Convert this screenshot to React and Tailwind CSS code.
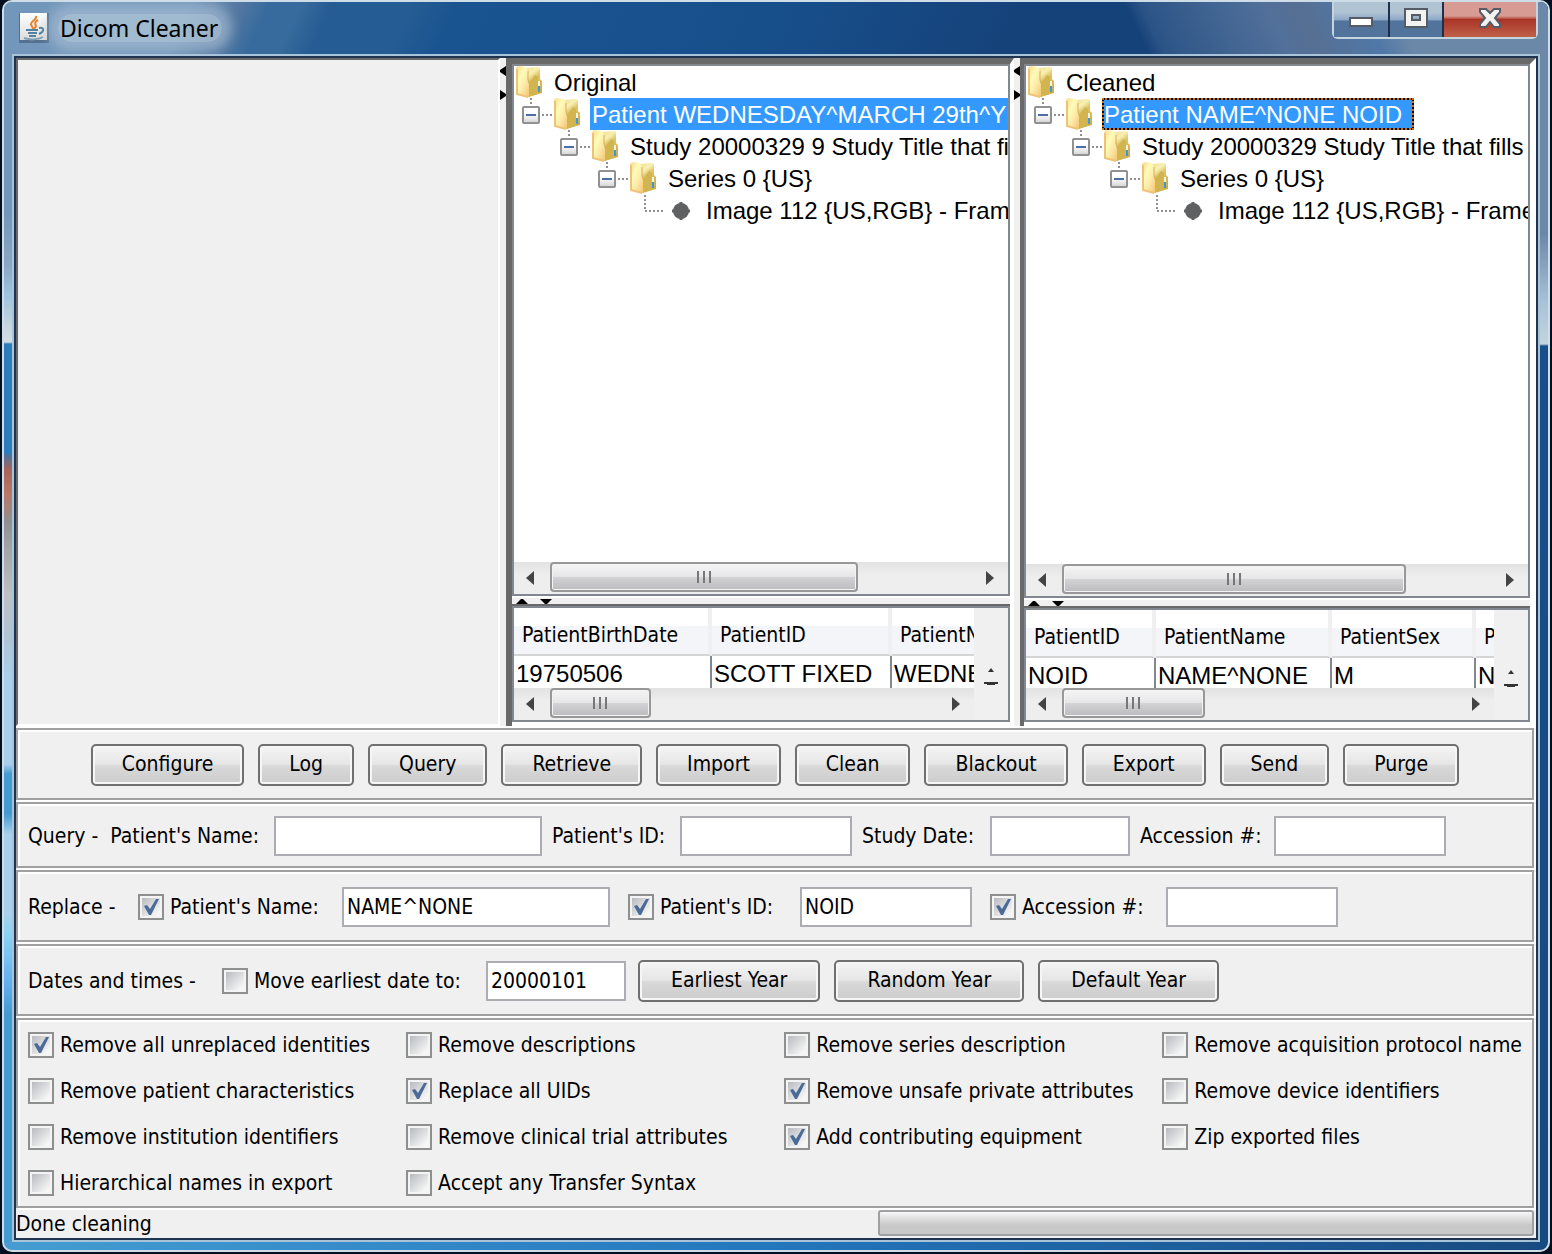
const originalTree = {
  label: 'Original study tree',
  rows: [
    { text: 'Original' },
    { text: 'Patient WEDNESDAY^MARCH 29th^YEAR 2000', selected: true },
    { text: 'Study 20000329 9 Study Title that fills the field' },
    { text: 'Series 0 {US}' },
    { text: 'Image 112 {US,RGB} - Frames 1' },
  ],
};

const cleanedTree = {
  label: 'Cleaned study tree',
  rows: [
    { text: 'Cleaned' },
    { text: 'Patient NAME^NONE NOID', selected: true, focused: true },
    { text: 'Study 20000329 Study Title that fills the field' },
    { text: 'Series 0 {US}' },
    { text: 'Image 112 {US,RGB} - Frames 1' },
  ],
};

const originalTable = [
  { head: 'PatientBirthDate', value: '19750506', width: 'w-[198px]' },
  { head: 'PatientID', value: 'SCOTT FIXED', width: 'w-[180px]' },
  { head: 'PatientName', value: 'WEDNESDAY', width: 'w-[180px]' },
];

const cleanedTable = [
  { head: 'PatientID', value: 'NOID', width: 'w-[130px]' },
  { head: 'PatientName', value: 'NAME^NONE', width: 'w-[176px]' },
  { head: 'PatientSex', value: 'M', width: 'w-[144px]' },
  { head: 'PatientAge', value: 'NONE', width: 'w-[144px]' },
];

const actions = ['Configure', 'Log', 'Query', 'Retrieve', 'Import', 'Clean', 'Blackout', 'Export', 'Send', 'Purge'];

const options = [
  { text: 'Remove all unreplaced identities', checked: true },
  { text: 'Remove descriptions' },
  { text: 'Remove series description' },
  { text: 'Remove acquisition protocol name' },
  { text: 'Remove patient characteristics' },
  { text: 'Replace all UIDs', checked: true },
  { text: 'Remove unsafe private attributes', checked: true },
  { text: 'Remove device identifiers' },
  { text: 'Remove institution identifiers' },
  { text: 'Remove clinical trial attributes' },
  { text: 'Add contributing equipment', checked: true },
  { text: 'Zip exported files' },
  { text: 'Hierarchical names in export' },
  { text: 'Accept any Transfer Syntax' },
];

const indents = ['pl-[2px]', 'pl-[8px]', 'pl-[46px]', 'pl-[84px]', 'pl-[122px]'];

const JavaIcon = () => (
  <svg width="32" height="32" viewBox="0 0 32 32" aria-hidden="true">
    <defs>
      <linearGradient id="java-tile" x1="0" y1="0" x2="0" y2="1">
        <stop offset="0" stopColor="#ffffff" />
        <stop offset="1" stopColor="#dcdcdc" />
      </linearGradient>
    </defs>
    <rect x="1" y="1" width="30" height="30" fill="#55708f" />
    <rect x="2" y="1" width="27" height="27" fill="url(#java-tile)" />
    <path d="M18 4 C19 8 13 9 13 12 C13 14 15 15 15 17" fill="none" stroke="#e8832a" strokeWidth="2" />
    <path d="M20 8 C16 10 17 12 18 14 C18 15 17 16 16 17" fill="none" stroke="#e8832a" strokeWidth="2" />
    <path d="M8 18 H20 M10 21 H19 M11 24 H18" stroke="#5382a1" strokeWidth="2" />
    <path d="M21 16 C27 15 26 20 21 22" fill="none" stroke="#5382a1" strokeWidth="2" />
    <path d="M6 26 C11 28 20 28 25 25" fill="none" stroke="#7d9fb8" strokeWidth="2" />
  </svg>
);

const FolderIcon = () => (
  <svg width="26" height="32" viewBox="0 0 26 32" className="shrink-0" aria-hidden="true">
    <defs>
      <linearGradient id="folder-front" x1="0" y1="0" x2="1" y2="1">
        <stop offset="0" stopColor="#f9d98c" />
        <stop offset="0.35" stopColor="#fffbb8" />
        <stop offset="0.6" stopColor="#fdeaa8" />
        <stop offset="1" stopColor="#f0bf6a" />
      </linearGradient>
      <linearGradient id="folder-back" x1="0" y1="0" x2="0.4" y2="1">
        <stop offset="0" stopColor="#f3dc8e" />
        <stop offset="0.3" stopColor="#f7f0b4" />
        <stop offset="0.5" stopColor="#dec568" />
        <stop offset="1" stopColor="#cfae45" />
      </linearGradient>
    </defs>
    <path d="M10 2 L22 1 L24 2 V13 L26 15 V27 L15 30 L10 29 Z" fill="url(#folder-back)" />
    <path d="M0 2 L2 0 L10 1 L12 4 V14 L14 20 V31 H11 L0 28 Z" fill="url(#folder-front)" />
    <path d="M12 5 V14 L14 20" fill="none" stroke="#d5ae58" strokeWidth="1" />
    <path d="M13 17 L19 9 L22 11 V28 L13 31 Z" fill="#d3b550" />
    <path d="M1 3 V28 L12 31" fill="none" stroke="#edc378" strokeWidth="2" />
    <path d="M23 15 V20" stroke="#f6f3e0" strokeWidth="2" />
    <path d="M23 20 V26" stroke="#3f97dc" strokeWidth="2" />
  </svg>
);

const ExpanderIcon = () => (
  <svg width="32" height="32" viewBox="0 0 32 32" className="shrink-0" aria-hidden="true">
    <defs>
      <linearGradient id="expander" x1="0" y1="0" x2="0" y2="1">
        <stop offset="0.4" stopColor="#ffffff" />
        <stop offset="1" stopColor="#d4d4d4" />
      </linearGradient>
    </defs>
    <path d="M9 0 V8" stroke="#909090" strokeWidth="2" strokeDasharray="2 2" />
    <rect x="1" y="9" width="16" height="16" rx="1" fill="url(#expander)" stroke="#919191" strokeWidth="2" />
    <path d="M4 17 H14" stroke="#4b70a8" strokeWidth="2" />
    <path d="M20 17 H31" stroke="#909090" strokeWidth="2" strokeDasharray="2 2" />
  </svg>
);

const LeafIcon = () => (
  <svg width="58" height="32" viewBox="0 0 58 32" className="shrink-0" aria-hidden="true">
    <path d="M9 1 V17 H28" fill="none" stroke="#909090" strokeWidth="2" strokeDasharray="2 2" />
    <circle cx="45" cy="17" r="8" fill="#5f6062" />
    <path d="M45 8 V26 M36 17 H54" stroke="#5f6062" strokeWidth="3" />
  </svg>
);

const Tree = ({ label, rows }) => (
  <ul role="tree" aria-label={label} className="min-h-0 flex-1 overflow-hidden bg-white font-['Liberation_Sans',sans-serif] text-2xl whitespace-nowrap">
    {rows.map((row, level) => (
      <li key={row.text} role="treeitem" aria-selected={!!row.selected} className={`flex h-8 items-center ${indents[level]}`}>
        {level > 0 && level < 4 && <ExpanderIcon />}
        {level < 4 ? <FolderIcon /> : <LeafIcon />}
        {row.focused ? (
          <span className="ml-[10px] bg-black">
            <span className="block border-2 border-dotted border-[#c87014] bg-[#3399ff] bg-clip-padding pt-[2px] pr-[10px] leading-[26px] text-white">{row.text}</span>
          </span>
        ) : (
          <span className={`ml-[10px] pt-[2px] pl-[2px] leading-[30px] ${row.selected ? 'bg-[#3399ff] text-white' : ''}`}>{row.text}</span>
        )}
      </li>
    ))}
  </ul>
);

const ScrollBar = ({ thumb }) => (
  <div className="flex h-8 shrink-0 bg-linear-to-b from-[#e2e2e2] to-[#eeeeee] to-40%">
    <button type="button" aria-label="Scroll left" className="flex w-9 items-center justify-center pr-1">
      <svg width="8" height="14" viewBox="0 0 8 14"><path d="M8 0 V14 L0 7 Z" fill="#444" /></svg>
    </button>
    <div className="flex-1">
      <div className={`flex h-[30px] items-center justify-center gap-1 rounded-sm border-2 border-[#989898] bg-[linear-gradient(#f5f5f5,#e6e6e8_50%,#d2d2d4_52%,#bcbcc0)] shadow-[inset_0_0_0_1px_#f4f4f4] ${thumb}`}>
        <i className="h-3 w-[2px] bg-[#77777a]" />
        <i className="h-3 w-[2px] bg-[#77777a]" />
        <i className="h-3 w-[2px] bg-[#77777a]" />
      </div>
    </div>
    <button type="button" aria-label="Scroll right" className="flex w-9 items-center justify-center">
      <svg width="8" height="14" viewBox="0 0 8 14"><path d="M0 0 V14 L8 7 Z" fill="#444" /></svg>
    </button>
  </div>
);

const AttributeTable = ({ columns, height, thumb }) => (
  <div className="flex shrink-0 border-2 border-[#828790] bg-[#f0f0f0]">
    <div className="min-w-0 flex-1">
      <div className={`overflow-hidden bg-white ${height}`}>
        <table className="w-0 table-fixed border-separate border-spacing-0 whitespace-nowrap">
          <thead>
            <tr>
              {columns.map((column) => (
                <th
                  key={column.head}
                  className={`h-12 overflow-hidden border-r-4 border-b-2 border-r-[#f0f0f0] border-b-[#d5d5d5] bg-linear-to-b from-white from-40% to-[#f3f5f8] to-40% pt-2 pl-2 text-left leading-7 font-normal ${column.width}`}
                >
                  {column.head}
                </th>
              ))}
            </tr>
          </thead>
          <tbody>
            <tr className="font-['Liberation_Sans',sans-serif] text-2xl leading-8">
              {columns.map((column) => (
                <td key={column.head} className="overflow-hidden border-r-2 border-[#828790] pt-[2px] pl-[2px]">{column.value}</td>
              ))}
            </tr>
          </tbody>
        </table>
      </div>
      <ScrollBar thumb={thumb} />
    </div>
    <div className="flex w-[34px] justify-center pt-[58px]">
      <svg width="16" height="22" viewBox="0 0 16 22" aria-hidden="true">
        <path d="M8 2 L11 6 H5 Z M1 16 H15 V18 H12 V19 H4 V18 H1 Z" fill="#333" />
      </svg>
    </div>
  </div>
);

const StudyPane = ({ tree, columns, edge, treeThumb, tableThumb, tableHeight }) => (
  <section className={`flex min-w-0 flex-col border-t-6 border-t-[#696969] border-r-white border-l-[#696969] bg-white pb-1 ${edge}`}>
    <div className="flex min-h-0 flex-1 flex-col border-2 border-[#828790]">
      <Tree {...tree} />
      <ScrollBar thumb={treeThumb} />
    </div>
    <div className="mt-[2px] flex shrink-0 items-end gap-3 border-b-2 border-[#696969] bg-[#f0f0f0] pl-1">
      <svg width="12" height="6" viewBox="0 0 12 6"><path d="M0 6 L5 1 H7 L12 6 Z" /></svg>
      <svg width="12" height="6" viewBox="0 0 12 6"><path d="M0 1 H12 L7 6 H5 Z" /></svg>
    </div>
    <AttributeTable columns={columns} height={tableHeight} thumb={tableThumb} />
  </section>
);

const Divider = () => (
  <div className="flex flex-col gap-3 bg-[#f0f0f0] pt-[7px]">
    <svg width="6" height="12" viewBox="0 0 6 12"><path d="M6 1 V11 L0 7 V5 Z" /></svg>
    <svg width="6" height="12" viewBox="0 0 6 12"><path d="M0 1 V11 L6 7 V5 Z" /></svg>
  </div>
);

const Panel = ({ className, children }) => (
  <div className={`mr-[2px] mb-[2px] shrink-0 border-2 border-[#a0a0a0] bg-[#f0f0f0] pt-[2px] whitespace-nowrap shadow-[2px_2px_0_#fff,inset_2px_2px_0_#fff] ${className}`}>
    {children}
  </div>
);

const PushButton = ({ padding = 'px-[29px]', children }) => (
  <button
    type="button"
    className={`h-[42px] rounded-[5px] border-2 border-[#707070] bg-[linear-gradient(#f4f4f4,#e6e6e6_48%,#d9d9d9_52%,#cccccc)] pb-[2px] shadow-[inset_0_0_0_2px_#f6f6f6] ${padding}`}
  >
    {children}
  </button>
);

const CheckBox = ({ checked, width = '', children }) => (
  <label className={`flex shrink-0 items-center gap-[6px] ${width}`}>
    <span className="grid size-[26px] shrink-0">
      <input
        type="checkbox"
        defaultChecked={checked}
        className="peer col-start-1 row-start-1 size-[26px] appearance-none border-2 border-[#8e8f8f] bg-linear-to-br from-[#b0b3b8] to-[#f6f6f6] to-80% shadow-[inset_0_0_0_2px_#f4f4f4]"
      />
      <svg viewBox="0 0 26 26" className="pointer-events-none invisible col-start-1 row-start-1 peer-checked:visible" aria-hidden="true">
        <path d="M6 12 L9 11 L12 15 L18 5 H21 L13 21 H11 Z" fill="#4a6a97" />
      </svg>
    </span>
    <span>{children}</span>
  </label>
);

const TextBox = ({ label, width, value }) => (
  <input type="text" aria-label={label} defaultValue={value} className={`h-10 border-2 border-[#abadb3] bg-white px-[3px] ${width}`} />
);

const App = () => (
  <div className="flex min-h-screen flex-col bg-[#04101f] px-[2px] pb-[2px] font-['DejaVu_Sans_Condensed','Noto_Sans',sans-serif] text-[21px] leading-7 text-black">
    <div className="flex flex-1 flex-col overflow-hidden rounded-[10px] border-2 border-[#cfdde8] bg-linear-to-r from-[#459dd2] via-[#2476bd] to-[#174a80]">
      <header className="flex h-[52px] shrink-0 items-start justify-between bg-[linear-gradient(65deg,transparent_73%,#2b5486_74%,#3f6391_78%,#52709a_82%,#566f94_84%,#5078a8_88%,#6c88a8_90%),linear-gradient(115deg,#7397bb_0,#7397bb_12%,#5578a2_15%,#376b9d_17%,#376b9d_19%,#255c93_21%,#255c93_26%,#1a5490_29%,#174f8b_50%,#16427a_65%,#16427a_100%)]">
        <div className="flex items-center gap-2 pt-[10px] pl-[14px]">
          <JavaIcon />
          <h1 className="rounded-full bg-[#b4c9d8]/70 pr-1 pl-[2px] font-['Noto_Sans','Open_Sans',sans-serif] text-[23px] leading-7 shadow-[0_0_12px_10px_#a3bad0b0]">Dicom Cleaner</h1>
        </div>
        <div className="mr-[10px] flex h-[37px] rounded-b-[6px] border-2 border-t-0 border-[#c5d5e0] bg-[#1d3048]">
          <button type="button" aria-label="Minimize" className="mr-[2px] flex w-[54px] justify-center bg-linear-to-b from-[#b0c3d3] from-30% via-[#8ea9c8] via-50% to-[#52739c] to-55% pt-[14px]">
            <svg width="24" height="12" viewBox="0 0 24 12"><rect x="1" y="2" width="22" height="8" fill="#fff" stroke="#555c66" strokeWidth="2" /></svg>
          </button>
          <button type="button" aria-label="Maximize" className="mr-[2px] flex w-[52px] justify-center bg-linear-to-b from-[#b0c3d3] from-30% via-[#8ea9c8] via-50% to-[#52739c] to-55% pt-[5px]">
            <svg width="24" height="22" viewBox="0 0 24 22"><path d="M1 2 H23 V20 H1 Z M8 8 V13 H16 V8 Z" fill="#f2f2f2" fillRule="evenodd" stroke="#555c66" strokeWidth="2" /></svg>
          </button>
          <button type="button" aria-label="Close" className="flex w-[92px] justify-center bg-linear-to-b from-[#d79b94] from-40% via-[#a93327] via-50% to-[#bf6049] pt-[5px]">
            <svg width="24" height="22" viewBox="0 0 24 22"><path d="M2 2 H8 L12 6 L16 2 H22 V5 L17 11 L22 17 V20 H16 L12 15 L8 20 H2 V17 L7 11 L2 5 Z" fill="#f2f2f2" stroke="#555c66" strokeWidth="2" /></svg>
          </button>
        </div>
      </header>

      <div className="flex flex-1">
        <div className="w-2 shrink-0 bg-[linear-gradient(#7397bb_0,#7397bb_160px,#8aa6c4_210px,#9cc3df_240px,#c3d4dd_270px,#d5dde6_288px,#2b7dbd_290px,#2b7dbd_398px,#50719c_402px,#a8645a_416px,#b87868_440px,#909090_468px,#a8a8a8_500px,#c0c0c4_540px,#b0c3d3_580px,#a8d0ee_630px,#a8d0ee_710px,#439bd0_720px,#439bd0_760px,#a8d0ee_780px,#a8d0ee_860px,#8cd2f4_880px,#62aef0_930px,#439bd0_960px)]" />
        <main className="flex min-w-0 flex-1 flex-col border-2 border-[#a9c3d8]">
          <div className="flex flex-1 flex-col border-2 border-[#1b3552] bg-[#f0f0f0]">
            <div className="grid min-h-[400px] flex-1 grid-cols-[484fr_6px_508fr_6px_516fr] border-b-2 border-white">
              <div className="border-2 border-[#696969] border-r-white border-b-white" />
              <Divider />
              <StudyPane
                tree={originalTree}
                columns={originalTable}
                edge="border-l-6 border-r-4"
                treeThumb="w-[73%]"
                tableThumb="w-[26%]"
                tableHeight="h-20"
              />
              <Divider />
              <StudyPane
                tree={cleanedTree}
                columns={cleanedTable}
                edge="border-l-4 border-r-6"
                treeThumb="w-[80%]"
                tableThumb="w-[36%]"
                tableHeight="h-[78px]"
              />
            </div>

            <Panel className="flex h-[72px] items-center justify-center gap-[14px]">
              {actions.map((action) => (
                <PushButton key={action}>{action}</PushButton>
              ))}
            </Panel>

            <Panel className="flex h-[66px] items-center gap-[10px] px-[10px]">
              <span className="flex w-[236px] gap-3">
                <span>Query -</span>
                <span>Patient's Name:</span>
              </span>
              <TextBox label="Query patient's name" width="w-[268px]" />
              <span className="w-[118px]">Patient's ID:</span>
              <TextBox label="Query patient's ID" width="w-[172px]" />
              <span className="w-[118px]">Study Date:</span>
              <TextBox label="Query study date" width="w-[140px]" />
              <span className="w-[124px]">Accession #:</span>
              <TextBox label="Query accession number" width="w-[172px]" />
            </Panel>

            <Panel className="flex h-[72px] items-center gap-[18px] px-[10px]">
              <span className="w-[92px]">Replace -</span>
              <CheckBox checked width="w-[186px]">Patient's Name:</CheckBox>
              <TextBox label="Replacement patient's name" width="w-[268px]" value="NAME^NONE" />
              <CheckBox checked width="w-[154px]">Patient's ID:</CheckBox>
              <TextBox label="Replacement patient's ID" width="w-[172px]" value="NOID" />
              <CheckBox checked width="w-[158px]">Accession #:</CheckBox>
              <TextBox label="Replacement accession number" width="w-[172px]" />
            </Panel>

            <Panel className="flex h-[72px] items-center gap-3 px-[10px]">
              <span className="w-[182px]">Dates and times -</span>
              <CheckBox width="w-[252px]">Move earliest date to:</CheckBox>
              <TextBox label="Earliest date" width="w-[140px]" value="20000101" />
              <div className="flex gap-[14px]">
                <PushButton padding="px-[31px]">Earliest Year</PushButton>
                <PushButton padding="px-[31px]">Random Year</PushButton>
                <PushButton padding="px-[31px]">Default Year</PushButton>
              </div>
            </Panel>

            <Panel className="grid h-[190px] auto-rows-[46px] grid-cols-[378fr_378fr_378fr_358fr] items-center px-[10px]">
              {options.map((option) => (
                <CheckBox key={option.text} checked={option.checked}>{option.text}</CheckBox>
              ))}
            </Panel>

            <footer className="flex h-7 shrink-0 items-start justify-between pr-[2px]">
              <span>Done cleaning</span>
              <div role="progressbar" aria-label="Progress" className="h-[26px] w-[656px] rounded-[3px] border-2 border-[#a0a0a4] bg-linear-to-b from-[#f8f8f8] to-[#c8c8c8] to-60%" />
            </footer>
          </div>
        </main>
        <div className="w-2 shrink-0 bg-[linear-gradient(#6c88a8_0,#6c88a8_180px,#a9c3d8_250px,#c3d4dd_290px,#174f8b_292px,#174a80_100%)]" />
      </div>
      <div className="h-2 shrink-0" />
    </div>
  </div>
);

export default App;
